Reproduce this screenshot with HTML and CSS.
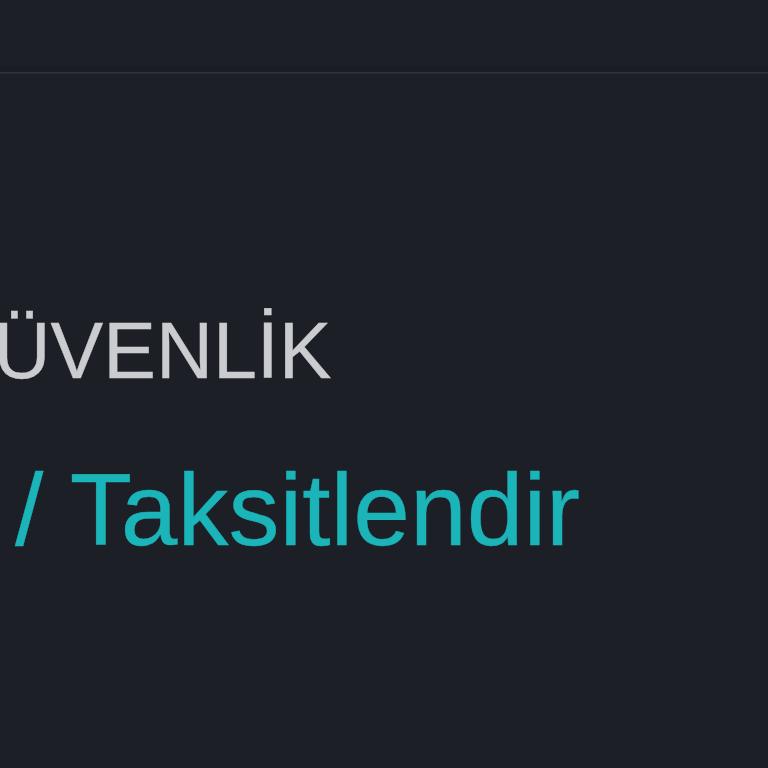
FILE: index.html
```html
<!DOCTYPE html>
<html lang="tr">
<head>
<meta charset="utf-8">
<link rel="stylesheet" href="styles.css">
</head>
<body>
<header class="topbar"></header>
<main class="hero">
  <h1 class="hero-title">GÜVENLİK</h1>
  <p class="hero-sub">/ Taksitlendir</p>
</main>
</body>
</html>
```
FILE: styles.css
```css
html, body {
  margin: 0;
  padding: 0;
  background: #1c1f26;
  height: 100%;
  overflow: hidden;
}
body {
  font-family: "Liberation Sans", Arial, sans-serif;
}
.topbar {
  height: 66px;
  border-bottom: 6px solid #191c22;
  box-shadow: 0 1px 0 #2e323a, 0 2px 0 #262a31;
}
.hero {
  padding-top: 239px;
}
.hero-title {
  margin: 0 0 0 -68px;
  font-size: 79px;
  font-weight: 400;
  line-height: 1;
  color: #cbcccf;
  white-space: nowrap;
  -webkit-text-stroke: 0.4px #cbcccf;
}
.hero-sub {
  margin: 69px 0 0 15px;
  font-size: 102px;
  line-height: 1;
  color: #1bb4b9;
  white-space: nowrap;
  -webkit-text-stroke: 0.4px #1bb4b9;
}
```
